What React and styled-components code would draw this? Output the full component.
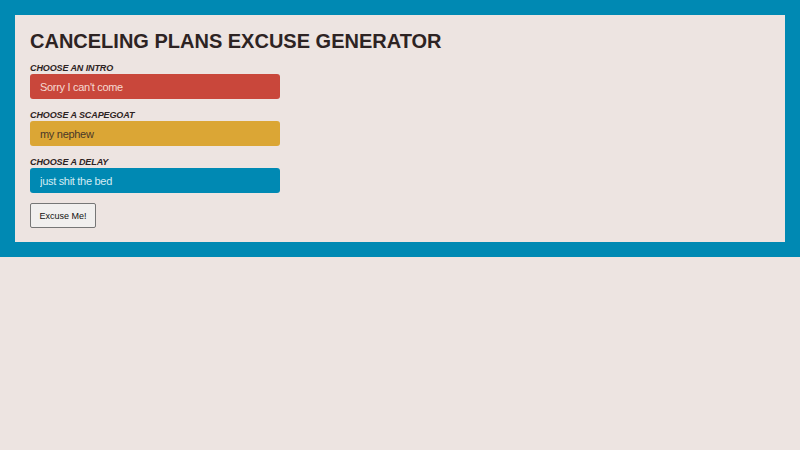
import styled, { createGlobalStyle } from "styled-components";

const GlobalStyle = createGlobalStyle`
  body {
    margin: 0;
    background: #ede4e1;
    font-family: "Liberation Sans", Arial, sans-serif;
    color: #2d2323;
  }
`;

// STYLES
const Frame = styled.div`
  background: #0089b3;
  padding: 15px;
`;

const Panel = styled.main`
  background: #ede4e1;
  padding: 15px 15px 14px;
`;

const Title = styled.h1`
  margin: 0 0 10px;
  font-size: 20px;
  line-height: 22px;
  font-weight: 700;
`;

const Field = styled.div`
  margin-bottom: 10px;
`;

const Label = styled.label`
  display: block;
  font-size: 9px;
  line-height: 12px;
  font-weight: 700;
  font-style: italic;
  letter-spacing: -0.1px;
`;

const Choice = styled.select`
  appearance: none;
  display: block;
  width: 250px;
  height: 25px;
  margin: 0;
  padding: 0 10px;
  border: none;
  border-radius: 3px;
  font-family: inherit;
  font-size: 11px;
  letter-spacing: -0.3px;
  background: ${(p) => p.$bg};
  color: ${(p) => p.$fg};
  outline: none;
`;

const Button = styled.button`
  display: block;
  width: 66px;
  height: 25px;
  padding: 0;
  font-family: inherit;
  font-size: 9px;
  color: #111;
  background: #f1efee;
  border: 1px solid #767676;
  border-radius: 2px;
`;
//END STYLES

const fields = [
  { label: "CHOOSE AN INTRO", value: "Sorry I can't come", bg: "#c9473b", fg: "#f6d9d2" },
  { label: "CHOOSE A SCAPEGOAT", value: "my nephew", bg: "#dba635", fg: "#4a3828" },
  { label: "CHOOSE A DELAY", value: "just shit the bed", bg: "#0089b3", fg: "#d4ecf4" },
];

export default function App() {
  return (
    <>
      <GlobalStyle />
      <Frame>
        <Panel>
          <Title>CANCELING PLANS EXCUSE GENERATOR</Title>
          {fields.map((f) => (
            <Field key={f.label}>
              <Label>{f.label}</Label>
              <Choice $bg={f.bg} $fg={f.fg} defaultValue={f.value}>
                <option>{f.value}</option>
              </Choice>
            </Field>
          ))}
          <Button>Excuse Me!</Button>
        </Panel>
      </Frame>
    </>
  );
}
